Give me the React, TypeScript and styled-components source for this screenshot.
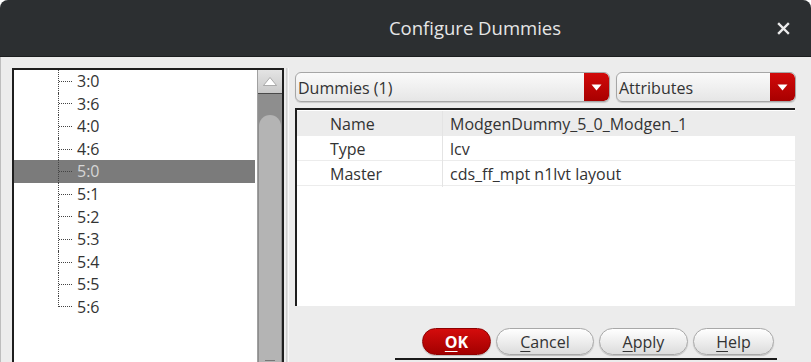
import React from "react";
import styled, { createGlobalStyle } from "styled-components";

const GlobalStyle = createGlobalStyle`
  html, body {
    margin: 0;
    padding: 0;
    background: #ffffff;
    overflow: hidden;
  }
  body {
    font-family: "Open Sans", "Noto Sans", sans-serif;
  }
`;

const Window = styled.div`
  width: 811px;
  height: 362px;
  display: flex;
  flex-direction: column;
  overflow: hidden;
  border-radius: 8px 8px 0 0;
  background: #ececec;
`;

const TitleBar = styled.div`
  height: 57px;
  flex-shrink: 0;
  display: flex;
  align-items: center;
  justify-content: center;
  position: relative;
  background: #2c2f31;
  border-bottom: 1px solid #1c1e1f;
  box-sizing: border-box;
`;

const Title = styled.div`
  font-family: "Open Sans", sans-serif;
  font-size: 18.5px;
  font-weight: 500;
  color: #e6e6e6;
  margin-left: 139px;
  margin-bottom: 1px;
`;

const CloseButton = styled.div`
  position: absolute;
  right: 20px;
  top: 20px;
  width: 16px;
  height: 16px;
  display: flex;
  align-items: center;
  justify-content: center;
`;

const Body = styled.div`
  flex: 1;
  display: flex;
  padding: 11px 0 0 2px;
  border-left: 1px solid #bdbdbd;
  min-height: 0;
`;

const TreePanel = styled.div`
  margin-left: 9px;
  width: 272px;
  height: 320px;
  flex-shrink: 0;
  box-sizing: border-box;
  border: 2px solid #1e1e1e;
  border-bottom: none;
  display: flex;
  background: #ffffff;
`;

const TreeList = styled.div`
  flex: 1;
  display: flex;
  flex-direction: column;
`;

const TreeRow = styled.div<{ $selected?: boolean }>`
  height: 22.6px;
  display: flex;
  align-items: stretch;
  margin-right: 2px;
  background: ${(p) => (p.$selected ? "#7b7b7b" : "transparent")};
  color: ${(p) => (p.$selected ? "#d6d6d6" : "#333333")};
  font-size: 16px;
  line-height: 22px;
`;

const Indent = styled.div`
  width: 44px;
  flex-shrink: 0;
`;

const Branch = styled.div<{ $last?: boolean }>`
  width: 18px;
  flex-shrink: 0;
  display: flex;
  align-items: ${(p) => (p.$last ? "flex-end" : "center")};
  align-self: flex-start;
  height: ${(p) => (p.$last ? "50%" : "100%")};
  border-left: 1px dotted #444;
  box-sizing: border-box;
`;

const Tick = styled.div`
  width: 13px;
  border-top: 1px dotted #444;
`;

const Label = styled.span`
  padding-left: 1px;
`;

const Scrollbar = styled.div`
  width: 24px;
  flex-shrink: 0;
  display: flex;
  flex-direction: column;
  background: #8e8e8e;
  border-left: 1px solid #a0a0a0;
`;

const ScrollButton = styled.div`
  height: 23px;
  flex-shrink: 0;
  display: flex;
  align-items: center;
  justify-content: center;
  background: linear-gradient(#e4e4e4, #c9c9c9);
  border-bottom: 1px solid #4a4a4a;
`;

const Track = styled.div`
  height: 21px;
  flex-shrink: 0;
`;

const Thumb = styled.div`
  flex: 1;
  margin: 0 1px;
  border-radius: 11px 11px 0 0;
  background: #b4b4b4;
  display: flex;
  flex-direction: column;
  align-items: center;
  justify-content: flex-end;
  padding-bottom: 18px;
`;

const Grip = styled.div`
  width: 10px;
  display: flex;
  flex-direction: column;
  gap: 2px;
`;

const GripLine = styled.div`
  height: 1px;
  background: #777;
`;

const Divider = styled.div`
  width: 1px;
  margin-left: 2px;
  border-left: 1px solid #d0d0d0;
  border-right: 1px solid #f8f8f8;
  flex-shrink: 0;
  background: #e0e0e0;
`;

const RightColumn = styled.div`
  flex: 1;
  min-width: 0;
  display: flex;
  flex-direction: column;
  padding: 4px 14px 0 6px;
`;

const ComboRow = styled.div`
  display: flex;
  gap: 6px;
  height: 30px;
`;

const Combo = styled.div<{ $width: number }>`
  width: ${(p) => p.$width}px;
  box-sizing: border-box;
  display: flex;
  align-items: stretch;
  border: 1px solid #a6a6a6;
  border-radius: 6px;
  overflow: hidden;
  background: linear-gradient(#fafafa, #e6e6e6);
  box-shadow: 0 1px 1px rgba(0, 0, 0, 0.15);
`;

const ComboText = styled.div`
  flex: 1;
  padding-left: 2px;
  font-size: 16px;
  color: #333;
  line-height: 30px;
`;

const ComboArrow = styled.div`
  width: 25px;
  display: flex;
  align-items: center;
  justify-content: center;
  background: linear-gradient(#d20a0a, #a80000);
  border-radius: 0 5px 5px 0;
`;

const Table = styled.div`
  margin-top: 6px;
  height: 198px;
  margin-right: 2px;
  box-sizing: border-box;
  border-top: 2px solid #1e1e1e;
  border-left: 2px solid #1e1e1e;
  background: #ffffff;
  display: flex;
  flex-direction: column;
  padding-top: 1px;
`;

const TableRow = styled.div<{ $shaded?: boolean }>`
  height: 25px;
  flex-shrink: 0;
  display: grid;
  grid-template-columns: 146px 1fr;
  background: ${(p) => (p.$shaded ? "#ececec" : "#ffffff")};
  border-bottom: 1px solid #ececec;
  box-sizing: border-box;
  font-size: 16px;
  color: #333;
  line-height: 26px;
`;

const KeyCell = styled.div`
  padding-left: 33px;
  border-right: 1px solid #e4e4e4;
`;

const ValueCell = styled.div`
  padding-left: 7px;
`;

const ButtonRow = styled.div`
  display: flex;
  justify-content: flex-end;
  gap: 5px;
  margin-top: 22px;
  padding-right: 23px;
`;

const Button = styled.div<{ $primary?: boolean; $width: number }>`
  width: ${(p) => p.$width}px;
  height: 27px;
  box-sizing: border-box;
  border-radius: 14px;
  display: flex;
  align-items: center;
  justify-content: center;
  font-size: 16px;
  font-weight: ${(p) => (p.$primary ? 700 : 400)};
  color: ${(p) => (p.$primary ? "#ffffff" : "#333333")};
  background: ${(p) =>
    p.$primary
      ? "linear-gradient(#d40c0c, #a30000)"
      : "linear-gradient(#ffffff, #dcdcdc)"};
  border: 1px solid ${(p) => (p.$primary ? "#8e0000" : "#a8a8a8")};
  box-shadow: 0 1px 1px rgba(0, 0, 0, 0.2);
`;

const Mnemonic = styled.span`
  text-decoration: underline;
  text-underline-offset: 3px;
`;

const BottomEdge = styled.div`
  height: 2px;
  margin-top: 3px;
  margin-left: 100px;
  margin-right: 20px;
  background: #1a1a1a;
`;

const items = ["3:0", "3:6", "4:0", "4:6", "5:0", "5:1", "5:2", "5:3", "5:4", "5:5", "5:6"];

const attrs = [
  { key: "Name", value: "ModgenDummy_5_0_Modgen_1" },
  { key: "Type", value: "lcv" },
  { key: "Master", value: "cds_ff_mpt n1lvt layout" },
];

const ArrowDown = () => (
  <svg width="11" height="7" viewBox="0 0 11 7">
    <path d="M0.5 0.5 L10.5 0.5 L5.5 6.5 Z" fill="#ffffff" />
  </svg>
);

export default function App() {
  return (
    <>
      <GlobalStyle />
      <Window>
        <TitleBar>
          <Title>Configure Dummies</Title>
          <CloseButton>
            <svg width="13" height="13" viewBox="0 0 13 13">
              <path d="M2 2 L11 11 M11 2 L2 11" stroke="#ececec" strokeWidth="2.4" strokeLinecap="square" />
            </svg>
          </CloseButton>
        </TitleBar>
        <Body>
          <TreePanel>
            <TreeList>
              {items.map((it, i) => (
                <TreeRow key={it} $selected={it === "5:0"}>
                  <Indent />
                  <Branch $last={i === items.length - 1}>
                    <Tick />
                  </Branch>
                  <Label>{it}</Label>
                </TreeRow>
              ))}
            </TreeList>
            <Scrollbar>
              <ScrollButton>
                <svg width="14" height="9" viewBox="0 0 14 9">
                  <path d="M7 0.5 L13.5 8.5 L0.5 8.5 Z" fill="#ffffff" stroke="#9a9a9a" strokeWidth="0.8" />
                </svg>
              </ScrollButton>
              <Track />
              <Thumb>
                <Grip>
                  <GripLine />
                  <GripLine />
                  <GripLine />
                  <GripLine />
                </Grip>
              </Thumb>
            </Scrollbar>
          </TreePanel>
          <Divider />
          <RightColumn>
            <ComboRow>
              <Combo $width={315}>
                <ComboText>Dummies (1)</ComboText>
                <ComboArrow>
                  <ArrowDown />
                </ComboArrow>
              </Combo>
              <Combo $width={180}>
                <ComboText>Attributes</ComboText>
                <ComboArrow>
                  <ArrowDown />
                </ComboArrow>
              </Combo>
            </ComboRow>
            <Table>
              {attrs.map((a, i) => (
                <TableRow key={a.key} $shaded={i === 0}>
                  <KeyCell>{a.key}</KeyCell>
                  <ValueCell>{a.value}</ValueCell>
                </TableRow>
              ))}
            </Table>
            <ButtonRow>
              <Button $primary $width={69}>
                <Mnemonic>O</Mnemonic>K
              </Button>
              <Button $width={98}>
                <Mnemonic>C</Mnemonic>ancel
              </Button>
              <Button $width={89}>
                <Mnemonic>A</Mnemonic>pply
              </Button>
              <Button $width={81}>
                <Mnemonic>H</Mnemonic>elp
              </Button>
            </ButtonRow>
            <BottomEdge />
          </RightColumn>
        </Body>
      </Window>
    </>
  );
}
